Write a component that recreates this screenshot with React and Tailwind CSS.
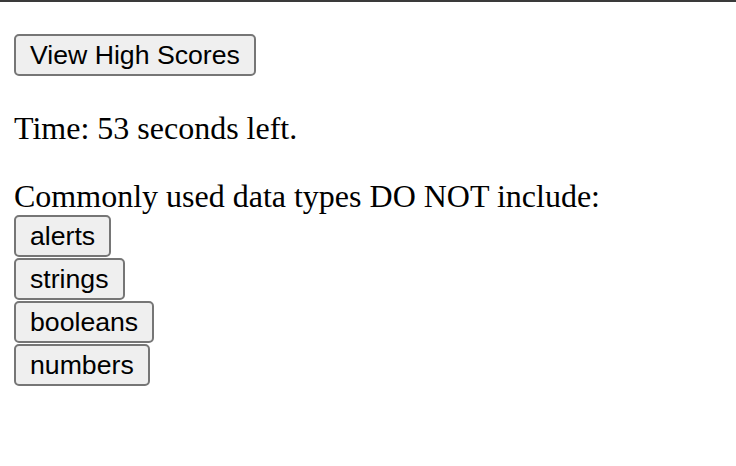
export default function App() {
  const btn =
    "block h-[42px] px-[14px] border-2 border-[#767676] rounded-[5px] bg-[#efefef] text-black text-[26.67px] leading-[38px] font-['Liberation_Sans',Arial,sans-serif]";
  return (
    <div className="w-[736px] h-[466px] bg-white border-t-2 border-[#3a3a3a] pl-[14px] font-['Liberation_Serif','Times_New_Roman',serif] text-[32px] text-black">
      <div className="pt-[32px]">
        <button className={btn}>View High Scores</button>
      </div>
      <p className="mt-[34px] leading-[37px]">Time: 53 seconds left.</p>
      <p className="mt-[31px] leading-[37px]">Commonly used data types DO NOT include:</p>
      <div className="flex flex-col items-start gap-[1px]">
        <button className={btn}>alerts</button>
        <button className={btn}>strings</button>
        <button className={btn}>booleans</button>
        <button className={btn}>numbers</button>
      </div>
    </div>
  );
}
